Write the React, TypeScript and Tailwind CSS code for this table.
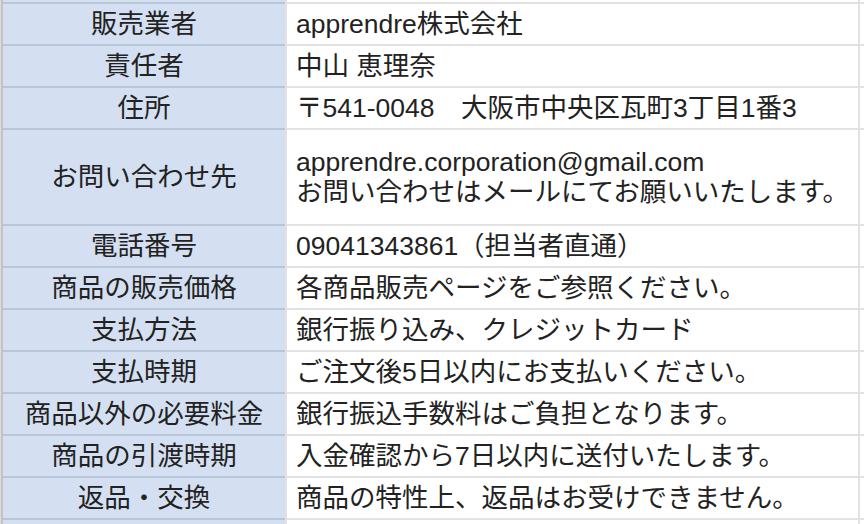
import React from "react";

type Row = { label: string; value: string[]; h: string };

const rows: Row[] = [
  { label: "販売業者", value: ["apprendre株式会社"], h: "h-[42px]" },
  { label: "責任者", value: ["中山 恵理奈"], h: "h-[42px]" },
  { label: "住所", value: ["〒541-0048\u3000大阪市中央区瓦町3丁目1番3"], h: "h-[42px]" },
  {
    label: "お問い合わせ先",
    value: ["apprendre.corporation@gmail.com", "お問い合わせはメールにてお願いいたします。"],
    h: "h-[96px]",
  },
  { label: "電話番号", value: ["09041343861（担当者直通）"], h: "h-[42px]" },
  { label: "商品の販売価格", value: ["各商品販売ページをご参照ください。"], h: "h-[42px]" },
  { label: "支払方法", value: ["銀行振り込み、クレジットカード"], h: "h-[42px]" },
  { label: "支払時期", value: ["ご注文後5日以内にお支払いください。"], h: "h-[42px]" },
  { label: "商品以外の必要料金", value: ["銀行振込手数料はご負担となります。"], h: "h-[42px]" },
  { label: "商品の引渡時期", value: ["入金確認から7日以内に送付いたします。"], h: "h-[42px]" },
  { label: "返品・交換", value: ["商品の特性上、返品はお受けできません。"], h: "h-[42px]" },
  { label: "", value: [""], h: "h-[42px]" },
];

function TableRow({ row }: { row: Row }) {
  return (
    <div className={`flex shrink-0 ${row.h}`}>
      <div className="w-[282px] shrink-0 border-t-2 border-[#b9c6d9] bg-[#d4e0f1] flex items-center justify-center text-[#222222]">
        <span className="leading-[30px] whitespace-nowrap">{row.label}</span>
      </div>
      <div className="w-[2px] shrink-0 bg-[#e2e2e2]" />
      <div className="w-[571px] shrink-0 border-t-2 border-[#e2e2e2] bg-white flex flex-col justify-center pl-[9px] text-[#222222]">
        {row.value.map((v, i) => (
          <div key={i} className="leading-[30px] whitespace-nowrap">
            {v}
          </div>
        ))}
      </div>
      <div className="w-[2px] shrink-0 bg-[#e2e2e2]" />
      <div className="w-[4px] shrink-0 border-t-2 border-[#e2e2e2] bg-white" />
    </div>
  );
}

export default function App() {
  return (
    <div
      className="flex w-[864px] h-[524px] overflow-hidden bg-white text-[26.5px]"
      style={{ fontFamily: '"Liberation Sans", "Noto Sans CJK JP", sans-serif' }}
    >
      <div className="w-[1px] shrink-0 bg-[#dcdcdc]" />
      <div className="w-[2px] shrink-0 bg-[#c3c3c3]" />
      <div className="flex flex-col w-[861px]">
        <div className="flex h-[2px] shrink-0">
          <div className="w-[282px] bg-[#d4e0f1]" />
          <div className="w-[2px] bg-[#e2e2e2]" />
          <div className="w-[571px] bg-white" />
          <div className="w-[2px] bg-[#e2e2e2]" />
          <div className="w-[4px] bg-white" />
        </div>
        {rows.map((r, i) => (
          <TableRow key={i} row={r} />
        ))}
      </div>
    </div>
  );
}
